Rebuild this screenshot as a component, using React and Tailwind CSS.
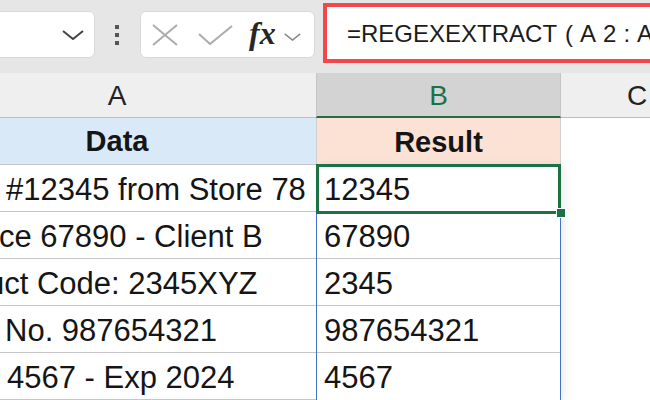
import React from "react";

const dataRows = [
  { a: "#12345 from Store 78", pad: "pl-[88px]", b: "12345" },
  { a: "ce 67890 - Client B", pad: "pl-[81px]", b: "67890" },
  { a: "uct Code: 2345XYZ", pad: "pl-[69px]", b: "2345" },
  { a: "No. 987654321", pad: "pl-[87px]", b: "987654321" },
  { a: "4567 - Exp 2024", pad: "pl-[89px]", b: "4567" },
];

function Chevron({ className }) {
  return (
    <svg viewBox="0 0 22 10" className={className} fill="none" strokeWidth="2">
      <path d="M1 1 L11 9 L21 1" />
    </svg>
  );
}

function Toolbar() {
  return (
    <div className="h-[73px] bg-[#e6e6e6] flex items-start">
      {/* name box */}
      <div className="-ml-[8px] mt-[11px] w-[103px] h-[47px] shrink-0 rounded-[6px] bg-white border border-[#d8d8d8] flex items-center justify-end pr-[10px]">
        <Chevron className="w-[22px] h-[10px] stroke-[#444]" />
      </div>
      {/* more dots */}
      <div className="ml-[20px] mt-[25px] flex flex-col gap-[4px] shrink-0">
        <span className="w-[4px] h-[4px] bg-[#555]" />
        <span className="w-[4px] h-[4px] bg-[#555]" />
        <span className="w-[4px] h-[4px] bg-[#555]" />
      </div>
      {/* cancel / enter / fx */}
      <div className="ml-[21px] mt-[11px] w-[175px] h-[47px] shrink-0 rounded-[6px] bg-white border border-[#d8d8d8] flex items-center pl-[11px]">
        <svg viewBox="0 0 26 22" className="w-[26px] h-[22px]" fill="none" stroke="#acacac" strokeWidth="2">
          <path d="M1 1 L25 21 M25 1 L1 21" />
        </svg>
        <svg viewBox="0 0 35 20" className="ml-[20px] w-[35px] h-[20px]" fill="none" stroke="#acacac" strokeWidth="2">
          <path d="M1 9 L12 19 L34 1" />
        </svg>
        <span className="ml-[16px] text-[32px] leading-none italic font-semibold text-[#262626] font-['Liberation_Serif',serif] -mt-[4px]">
          fx
        </span>
        <Chevron className="ml-[8px] mt-[4px] w-[17px] h-[8px] stroke-[#8a8a8a]" />
      </div>
      {/* formula bar with red highlight */}
      <div className="ml-[8px] mt-[3px] h-[60px] w-[360px] shrink-0 border-[4px] border-[#f2474b] bg-white flex items-center pl-[20px] overflow-hidden">
        <span className="whitespace-nowrap text-[24px] text-[#1c1c1c] font-['Liberation_Sans',sans-serif] pt-[2px]">
          =REGEXEXTRACT<span className="ml-[8px] tracking-[7px]">(A2:A6,"\d+")</span>
        </span>
      </div>
    </div>
  );
}

export default function App() {
  return (
    <div className="w-[650px] h-[400px] overflow-hidden bg-white font-['Liberation_Sans',Arial,sans-serif] text-[#151515]">
      <Toolbar />
      <div className="flex -ml-[82px]">
        {/* column A */}
        <div className="w-[398px] shrink-0 flex flex-col">
          <div className="h-[45px] bg-[#efefef] border-b border-[#bdbdbd] flex items-center justify-center text-[28px] text-[#222] pt-[2px]">
            A
          </div>
          <div className="h-[47px] bg-[#dae9f8] border-b border-[#c6c6c6] flex items-center justify-center text-[29px] font-bold pt-[2px]">
            Data
          </div>
          {dataRows.map((r) => (
            <div
              key={r.a}
              className={`h-[47px] border-b border-[#c6c6c6] flex items-center whitespace-nowrap overflow-hidden text-[31px] pt-[4px] ${r.pad}`}
            >
              {r.a}
            </div>
          ))}
        </div>
        {/* column B */}
        <div className="w-[245px] shrink-0 flex flex-col">
          <div className="h-[45px] bg-[#d3d3d3] border-l border-r border-[#c4c4c4] border-b-2 border-b-[#1e7145] flex items-center justify-center text-[28px] text-[#1e7145] pt-[2px]">
            B
          </div>
          <div className="h-[47px] bg-[#fbe2d5] border-l border-r border-[#cfcfcf] flex items-center justify-center text-[29px] font-bold pt-[2px]">
            Result
          </div>
          <div className="relative border-l border-r border-b border-[#4472c4] shadow-[4px_0_8px_rgba(0,0,0,0.07)]">
            {dataRows.map((r, i) => (
              <div
                key={r.b}
                className={`h-[47px] flex items-center text-[31px] pl-[7px] pt-[4px] ${
                  i < dataRows.length - 1 ? "border-b border-[#c6c6c6]" : "h-[46px]"
                }`}
              >
                {r.b}
              </div>
            ))}
            {/* active cell */}
            <div className="absolute -left-px -top-px w-[245px] h-[50px] border-[3px] border-[#1e7145]" />
            <div className="absolute left-[239px] top-[43px] w-[10px] h-[10px] bg-[#1e7145] border border-white" />
          </div>
        </div>
        {/* column C */}
        <div className="w-[152px] shrink-0 flex flex-col">
          <div className="h-[45px] bg-[#efefef] border-b border-[#bdbdbd] flex items-center justify-center text-[28px] text-[#222] pt-[2px]">
            C
          </div>
        </div>
      </div>
    </div>
  );
}
